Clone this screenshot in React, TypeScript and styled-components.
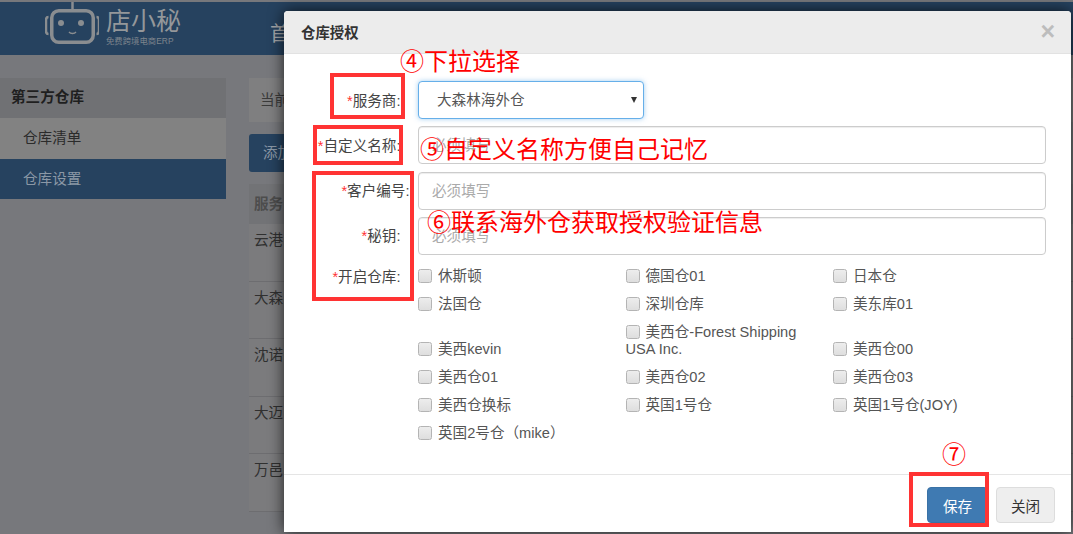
import React from 'react';
import styled, { createGlobalStyle } from 'styled-components';

const FONT = '"Liberation Sans", "Noto Sans CJK SC", sans-serif';

const GlobalStyle = createGlobalStyle`
  html, body {
    margin: 0;
    padding: 0;
    background: #fff;
    font-family: ${FONT};
    font-size: 14.6px;
  }
`;

const Page = styled.div`
  position: relative;
  width: 1073px;
  height: 534px;
  padding-top: 2px;
  box-sizing: border-box;
  overflow: hidden;
  background: #77787c;
`;

const Nav = styled.header`
  height: 53px;
  background: #26425f;
  display: flex;
  align-items: center;
  color: #94979a;
`;

const Logo = styled.div`
  display: flex;
  align-items: flex-start;
  margin-left: 45px;
  width: 225px;
  height: 53px;
`;

const Brand = styled.div`
  display: flex;
  flex-direction: column;
  margin-left: 7px;
`;

const BrandName = styled.span`
  font-size: 25px;
  line-height: 30px;
  margin-top: 4px;
`;

const BrandSub = styled.span`
  font-size: 8.4px;
  line-height: 11px;
  white-space: nowrap;
  color: #7e858d;
`;

const NavLink = styled.span`
  font-size: 20px;
  color: #a3a5a8;
  margin-top: 7px;
`;

const Content = styled.div`
  display: flex;
  padding-top: 23px;
  gap: 23px;
`;

const Sidebar = styled.aside`
  width: 226px;
  flex: none;
`;

const SideHead = styled.div`
  height: 40px;
  line-height: 38px;
  padding-left: 11px;
  font-weight: bold;
  color: #1f1f1f;
  background: #707174;
`;

const SideItem = styled.div<{ $active?: boolean }>`
  height: 40.5px;
  line-height: 40px;
  padding-left: 23px;
  color: ${p => (p.$active ? '#8b98a6' : '#2b2b2b')};
  background: ${p => (p.$active ? '#26425f' : '#828282')};
`;

const Main = styled.main`
  flex: 1;
  display: flex;
  flex-direction: column;
`;

const Crumb = styled.div`
  height: 44px;
  line-height: 44px;
  padding-left: 11px;
  background: #7f7f80;
  color: #3a3a3a;
`;

const AddButton = styled.div`
  width: 60px;
  height: 38px;
  line-height: 38px;
  margin-top: 12px;
  padding-left: 14px;
  box-sizing: border-box;
  border-radius: 3px;
  background: #26425f;
  color: #8b98a6;
`;

const TableHead = styled.div`
  height: 40px;
  line-height: 40px;
  margin-top: 12px;
  padding-left: 5px;
  background: #727376;
  color: #4d4d4d;
  font-weight: bold;
`;

const TableRow = styled.div`
  height: 57.5px;
  box-sizing: border-box;
  padding: 6px 0 0 5px;
  line-height: 20px;
  background: #7b7b7d;
  border-bottom: 1px solid #6d6d70;
  color: #303030;
`;

const Modal = styled.section`
  position: absolute;
  left: 284px;
  top: 11px;
  width: 787px;
  height: 521px;
  background: #fff;
  border-radius: 4px 4px 0 0;
  box-shadow: 0 0 15px rgba(0, 0, 0, 0.75);
  display: flex;
  flex-direction: column;
`;

const ModalHeader = styled.div`
  height: 43px;
  flex: none;
  box-sizing: border-box;
  padding: 0 16px 2px 17px;
  display: flex;
  align-items: center;
  justify-content: space-between;
  background: #ececec;
  border-bottom: 1px solid #e2e2e2;
  border-radius: 4px 4px 0 0;
`;

const ModalTitle = styled.h4`
  margin: 0;
  font-size: 14.4px;
  font-weight: bold;
  color: #333;
`;

const CloseMark = styled.span`
  font-size: 25px;
  line-height: 21px;
  font-weight: bold;
  color: #bdbdbd;
`;

const ModalBody = styled.form`
  flex: 1;
  padding: 27px 25px 0 0;
  display: flex;
  flex-direction: column;
  gap: 7.33px;
`;

const FormRow = styled.div`
  display: grid;
  grid-template-columns: 116.5px 628px;
  column-gap: 17.5px;
  align-items: center;
`;

const Label = styled.label<{ $overhang?: number }>`
  text-align: right;
  color: #444;
  white-space: nowrap;
  margin-top: -2px;
  margin-right: ${p => -(p.$overhang ?? 0)}px;
`;

const Star = styled.span`
  color: #f33;
`;

const SelectWrap = styled.div`
  position: relative;
  width: 226px;
  height: 38px;

  &::after {
    content: '';
    position: absolute;
    right: 7px;
    top: 16px;
    border-left: 3.5px solid transparent;
    border-right: 3.5px solid transparent;
    border-top: 6px solid #333;
  }
`;

const Select = styled.select`
  width: 100%;
  height: 100%;
  appearance: none;
  box-sizing: border-box;
  padding-left: 18px;
  background: #fff;
  border: 1px solid #66afe9;
  border-radius: 4px;
  box-shadow: 0 0 5px rgba(102, 175, 233, 0.6);
  outline: none;
  font: 14.6px ${FONT};
  color: #555;
`;

const Input = styled.input`
  height: 38px;
  width: 100%;
  box-sizing: border-box;
  padding: 0 13px;
  border: 1px solid #ccc;
  border-radius: 4px;
  box-shadow: inset 0 1px 1px rgba(0, 0, 0, 0.075);
  font: 14.6px ${FONT};

  &::placeholder {
    color: #aaa;
  }
`;

const WarehouseRow = styled(FormRow)`
  align-items: start;
  margin-top: 0.67px;
`;

const WarehouseLabel = styled(Label)`
  line-height: 20px;
  margin-top: 4px;
`;

const WarehouseGrid = styled.div`
  display: grid;
  grid-template-columns: repeat(3, 207.5px);
  align-items: end;
`;

const Warehouse = styled.label`
  display: block;
  padding: 5.5px 10px 5.5px 0;
  line-height: 17px;
  color: #555;
`;

const Check = styled.input.attrs({ type: 'checkbox' })`
  appearance: none;
  width: 14px;
  height: 14px;
  margin: 0 6px 0 0;
  vertical-align: -2px;
  box-sizing: border-box;
  border: 1px solid #b4b4b4;
  border-radius: 2.5px;
  background: linear-gradient(#ededed, #dedede);
`;

const ModalFooter = styled.div`
  height: 58px;
  flex: none;
  box-sizing: border-box;
  border-top: 1px solid #e5e5e5;
  padding: 12px 16px 0 0;
  display: flex;
  justify-content: flex-end;
  gap: 8px;
`;

const FootButton = styled.button<{ $primary?: boolean }>`
  width: ${p => (p.$primary ? '61px' : '59px')};
  height: 36px;
  border-radius: 4px;
  border: 1px solid ${p => (p.$primary ? '#3a72a6' : '#ddd')};
  background: ${p => (p.$primary ? '#3f7ab2' : '#eee')};
  color: ${p => (p.$primary ? '#fff' : '#333')};
  font: 14.6px ${FONT};
  padding: 0;
`;

const Note = styled.span<{ $x: number; $y: number }>`
  position: absolute;
  left: ${p => p.$x}px;
  top: ${p => p.$y}px;
  font-size: 24px;
  line-height: 30px;
  color: #ff0000;
  white-space: nowrap;
  pointer-events: none;
`;

const RedBox = styled.div<{ $x: number; $y: number; $w: number; $h: number }>`
  position: absolute;
  left: ${p => p.$x}px;
  top: ${p => p.$y}px;
  width: ${p => p.$w}px;
  height: ${p => p.$h}px;
  box-sizing: border-box;
  border: 4px solid #ff3333;
  pointer-events: none;
`;

const RobotLogo = () => (
  <svg width="54" height="46" viewBox="0 0 54 46" fill="none" stroke="#8a8d90" strokeWidth="3.5">
    <path d="M27.500 0v8" strokeWidth="2.500" />
    <rect x="6.750" y="8.750" width="41.500" height="31.500" rx="7" />
    <path d="M3.500 15c-1.500 0-2.500 1-2.500 3v11c0 2 1 3 2.500 3M51.500 15c1.500 0 2.500 1 2.500 3v11c0 2-1 3-2.500 3" strokeWidth="2.500" />
    <circle cx="16" cy="21" r="3" fill="#8a8d90" stroke="none" />
    <circle cx="36" cy="21" r="3" fill="#8a8d90" stroke="none" />
    <path d="M24 30c1.500 2 5.500 2 7 0" strokeWidth="1.300" />
  </svg>
);

const WAREHOUSES = [
  '休斯顿', '德国仓01', '日本仓',
  '法国仓', '深圳仓库', '美东库01',
  '美西kevin', '美西仓-Forest Shipping USA Inc.', '美西仓00',
  '美西仓01', '美西仓02', '美西仓03',
  '美西仓换标', '英国1号仓', '英国1号仓(JOY)',
  '英国2号仓（mike）',
];

const ROWS = ['云港', '大森', '沈诺', '大迈', '万邑'];

function App() {
  return (
    <Page>
      <GlobalStyle />
      <Nav>
        <Logo>
          <RobotLogo />
          <Brand>
            <BrandName>店小秘</BrandName>
            <BrandSub>免费跨境电商ERP</BrandSub>
          </Brand>
        </Logo>
        <NavLink>首</NavLink>
      </Nav>
      <Content>
        <Sidebar>
          <SideHead>第三方仓库</SideHead>
          <SideItem>仓库清单</SideItem>
          <SideItem $active>仓库设置</SideItem>
        </Sidebar>
        <Main>
          <Crumb>当前</Crumb>
          <AddButton>添加</AddButton>
          <TableHead>服务</TableHead>
          {ROWS.map(r => <TableRow key={r}>{r}</TableRow>)}
        </Main>
      </Content>

      <Modal>
        <ModalHeader>
          <ModalTitle>仓库授权</ModalTitle>
          <CloseMark>×</CloseMark>
        </ModalHeader>
        <ModalBody>
          <FormRow>
            <Label><Star>*</Star>服务商:</Label>
            <SelectWrap>
              <Select defaultValue="大森林海外仓">
                <option>大森林海外仓</option>
              </Select>
            </SelectWrap>
          </FormRow>
          <FormRow>
            <Label><Star>*</Star>自定义名称:</Label>
            <Input placeholder="必须填写" />
          </FormRow>
          <FormRow>
            <Label $overhang={9}><Star>*</Star>客户编号:</Label>
            <Input placeholder="必须填写" />
          </FormRow>
          <FormRow>
            <Label><Star>*</Star>秘钥:</Label>
            <Input placeholder="必须填写" />
          </FormRow>
          <WarehouseRow>
            <WarehouseLabel><Star>*</Star>开启仓库:</WarehouseLabel>
            <WarehouseGrid>
              {WAREHOUSES.map(w => (
                <Warehouse key={w}><Check />{w}</Warehouse>
              ))}
            </WarehouseGrid>
          </WarehouseRow>
        </ModalBody>
        <ModalFooter>
          <FootButton type="button" $primary>保存</FootButton>
          <FootButton type="button">关闭</FootButton>
        </ModalFooter>
      </Modal>

      <RedBox $x={330} $y={73} $w={75} $h={46} />
      <RedBox $x={313} $y={125} $w={90} $h={40} />
      <RedBox $x={312} $y={171} $w={102} $h={130} />
      <RedBox $x={909} $y={472} $w={80} $h={55} />
      <Note $x={400} $y={47}>④下拉选择</Note>
      <Note $x={420} $y={135}>⑤自定义名称方便自己记忆</Note>
      <Note $x={427} $y={208}>⑥联系海外仓获取授权验证信息</Note>
      <Note $x={942} $y={440}>⑦</Note>
    </Page>
  );
}

export default App;
